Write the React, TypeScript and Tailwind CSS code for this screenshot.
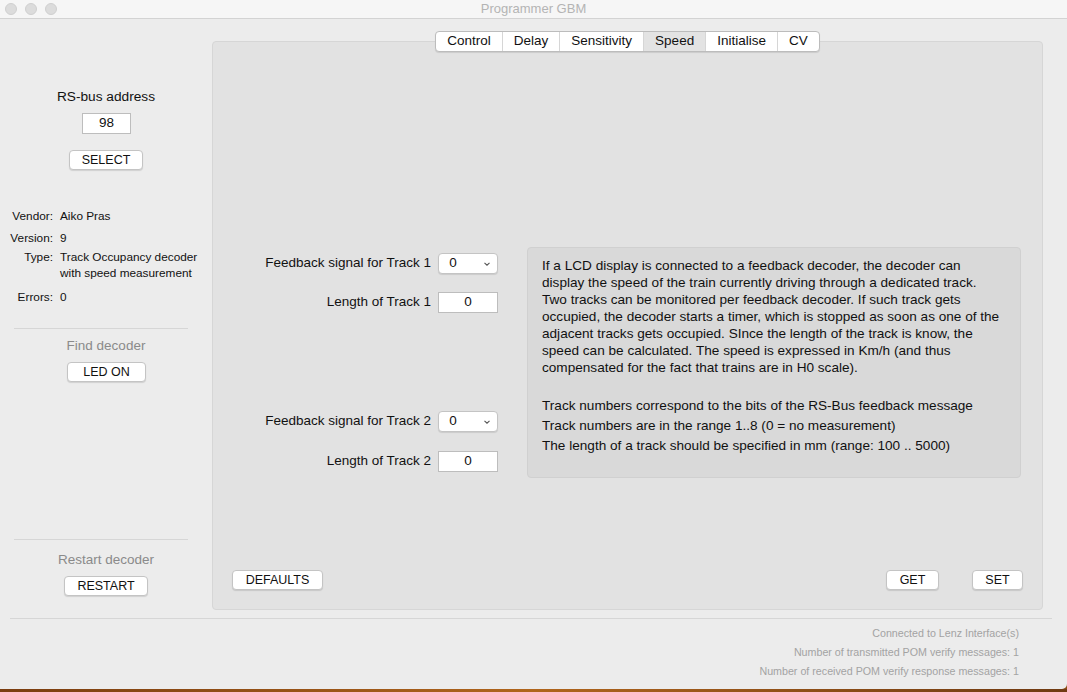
import React from "react";

const tabs = ["Control", "Delay", "Sensitivity", "Speed", "Initialise", "CV"];

const MacButton = ({ label, className }: { label: string; className: string }) => {
  return (
    <div
      className={
        "h-[20px] flex items-center justify-center bg-white border border-[#c4c4c4] rounded-[4px] shadow-[0_1px_1px_rgba(0,0,0,0.12)] text-[12.5px] text-[#111] " +
        className
      }
    >
      {label}
    </div>
  );
};

const Field = ({ value }: { value: string }) => {
  return (
    <div className="w-[60px] h-[21px] bg-white border border-[#bdbdbd] flex items-center justify-center text-[13.5px] text-[#111]">
      {value}
    </div>
  );
};

const Select = ({ value }: { value: string }) => {
  return (
    <div className="w-[60px] h-[21px] bg-white border border-[#c4c4c4] rounded-[4px] shadow-[0_1px_1px_rgba(0,0,0,0.1)] flex items-center text-[13.5px] text-[#111]">
      <span className="flex-1 text-center pr-[16px]">{value}</span>
      <svg width="8" height="6" viewBox="0 0 8 6" className="mr-[6px]">
        <path d="M1.5 1.8 L4 4.2 L6.5 1.8" fill="none" stroke="#555" strokeWidth="1.1" />
      </svg>
    </div>
  );
};

const infoLines = [
  "If a LCD display is connected to a feedback decoder, the decoder can",
  "display the speed of the train currently driving through a dedicated track.",
  "Two tracks can be monitored per feedback decoder. If such track gets",
  "occupied, the decoder starts a timer, which is stopped as soon as one of the",
  "adjacent tracks gets occupied. SInce the length of the track is know, the",
  "speed can be calculated. The speed is expressed in Km/h (and thus",
  "compensated for the fact that trains are in H0 scale).",
];

const App = () => {
  return (
    <div
      className="w-[1067px] h-[692px] overflow-hidden bg-[#8a4a12] flex flex-col"
      style={{ fontFamily: '"Liberation Sans", Arial, sans-serif' }}
    >
      <div className="h-[689px] bg-[#ececec] flex flex-col rounded-br-[5px]">
        {/* title bar */}
        <div className="h-[19px] shrink-0 bg-[#f6f6f6] border-b border-[#d3d3d3] flex items-center relative">
          <div className="flex gap-[8px] pl-[5px]">
            <div className="w-[12px] h-[12px] rounded-full bg-[#dcdcdc] border border-[#d0d0d0]" />
            <div className="w-[12px] h-[12px] rounded-full bg-[#dcdcdc] border border-[#d0d0d0]" />
            <div className="w-[12px] h-[12px] rounded-full bg-[#dcdcdc] border border-[#d0d0d0]" />
          </div>
          <div className="absolute inset-0 flex items-center justify-center text-[13px] text-[#b4b4b4]">
            Programmer GBM
          </div>
        </div>

        <div className="flex h-[591px]">
          {/* sidebar */}
          <div className="w-[212px] shrink-0 flex flex-col items-center">
            <div className="mt-[70px] h-[16px] leading-[16px] text-[13.7px] text-[#111]">RS-bus address</div>
            <div className="mt-[8px] ml-[1px] w-[49px] h-[21px] bg-white border border-[#bdbdbd] flex items-center justify-center text-[13.5px] text-[#111]">
              98
            </div>
            <MacButton label="SELECT" className="mt-[16px] w-[74px]" />

            <div className="self-start mt-[39px] grid grid-cols-[53px_1fr] gap-x-[7px] text-[11.8px] leading-[14px] text-[#111]">
              <div className="text-right">Vendor:</div>
              <div>Aiko Pras</div>
              <div className="text-right mt-[8px]">Version:</div>
              <div className="mt-[8px]">9</div>
              <div className="text-right mt-[5px]">Type:</div>
              <div className="mt-[5px] leading-[16px] -translate-y-[1px]">
                Track Occupancy decoder
                <br />
                with speed measurement
              </div>
              <div className="text-right mt-[8px]">Errors:</div>
              <div className="mt-[8px]">0</div>
            </div>

            <div className="mt-[24px] w-[174px] h-px bg-[#d6d6d6] -ml-[11px]" />
            <div className="mt-[9px] h-[16px] leading-[16px] text-[13.5px] text-[#8a8a8a]">Find decoder</div>
            <MacButton label="LED ON" className="mt-[8px] w-[79px] ml-[1px]" />

            <div className="mt-[157px] w-[174px] h-px bg-[#d6d6d6] -ml-[11px]" />
            <div className="mt-[12px] h-[16px] leading-[16px] text-[13.5px] text-[#8a8a8a]">Restart decoder</div>
            <MacButton label="RESTART" className="mt-[8px] w-[84px]" />
          </div>

          {/* main */}
          <div className="w-[831px] flex flex-col pt-[12px]">
            <div className="relative z-10 self-center flex h-[21px] -mb-[11px] bg-white border border-[#bcbcbc] rounded-[4px] shadow-[0_1px_1px_rgba(0,0,0,0.1)] text-[13.5px] text-[#111] overflow-hidden">
              {tabs.map((t, i) => (
                <div
                  key={t}
                  className={
                    "h-full flex items-center px-[11px] " +
                    (i > 0 ? "border-l border-[#d6d6d6] " : "") +
                    (t === "Speed" ? "bg-[#e3e3e3]" : "")
                  }
                >
                  {t}
                </div>
              ))}
            </div>

            <div className="h-[569px] bg-[#e2e2e2] border border-[#d6d6d6] rounded-[4px] flex flex-col">
              <div className="mt-[205px] flex items-start">
                <div className="self-start mt-[6px] grid grid-cols-[218px_60px] gap-x-[7px] items-center text-[13.5px] text-[#111]">
                  <div className="text-right">Feedback signal for Track 1</div>
                  <Select value="0" />
                  <div className="text-right mt-[18px]">Length of Track 1</div>
                  <div className="mt-[18px]">
                    <Field value="0" />
                  </div>
                  <div className="text-right mt-[98px]">Feedback signal for Track 2</div>
                  <div className="mt-[98px]">
                    <Select value="0" />
                  </div>
                  <div className="text-right mt-[19px]">Length of Track 2</div>
                  <div className="mt-[19px]">
                    <Field value="0" />
                  </div>
                </div>

                <div className="ml-[29px] w-[494px] h-[231px] bg-[#d9d9d9] border border-[#d0d0d0] rounded-[4px] pl-[14px] pt-[9px] text-[13.6px] text-[#111]">
                  <div className="leading-[17px]">
                    {infoLines.map((l) => (
                      <div key={l} className="whitespace-nowrap">
                        {l}
                      </div>
                    ))}
                  </div>
                  <div className="mt-[20px] leading-[20px]">
                    <div>Track numbers correspond to the bits of the RS-Bus feedback message</div>
                    <div>Track numbers are in the range 1..8 (0 = no measurement)</div>
                    <div>The length of a track should be specified in mm (range: 100 .. 5000)</div>
                  </div>
                </div>
              </div>

              <div className="mt-auto mb-[19px] flex items-center px-[19px]">
                <MacButton label="DEFAULTS" className="w-[91px]" />
                <div className="flex-1" />
                <MacButton label="GET" className="w-[53px]" />
                <MacButton label="SET" className="w-[51px] ml-[33px]" />
              </div>
            </div>
          </div>
        </div>

        {/* footer */}
        <div className="mt-[8px] mx-[10px] w-[1042px] h-px bg-[#d6d6d6]" />
        <div className="pr-[48px] pt-[5px] flex flex-col items-end text-[10.7px] leading-[19px] text-[#a3a3a3]">
          <div>Connected to Lenz Interface(s)</div>
          <div>Number of transmitted POM verify messages: 1</div>
          <div>Number of received POM verify response messages: 1</div>
        </div>
      </div>
      <div className="flex-1 bg-gradient-to-r from-[#7a3d10] via-[#b0651c] to-[#6f3a12]" />
    </div>
  );
};

export default App;
